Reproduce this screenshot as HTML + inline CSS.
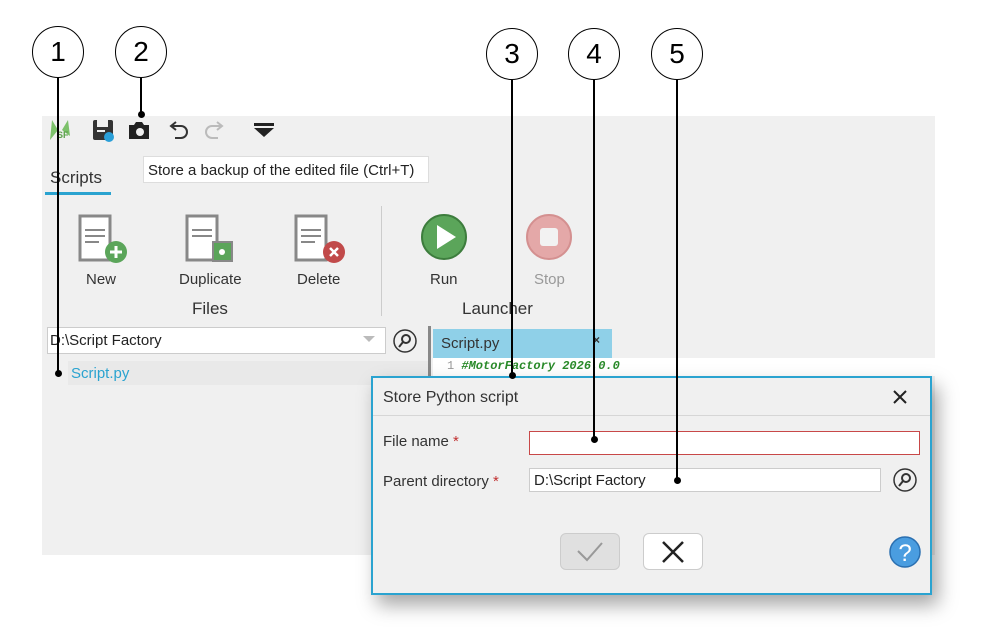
<!DOCTYPE html>
<html><head><style>
body{margin:0;width:996px;height:643px;background:#fff;position:relative;overflow:hidden;font-family:"Liberation Sans",sans-serif;color:#333}
.a{position:absolute}
.c{position:absolute;width:50px;height:50px;border:1.5px solid #000;border-radius:50%;background:#fff;font-size:28px;line-height:50px;text-align:center;color:#000;box-sizing:content-box}
.l{position:absolute;width:1.5px;background:#000}
.d{position:absolute;width:7px;height:7px;border-radius:50%;background:#000}
.t{position:absolute;font-size:15px;color:#333}
</style></head><body>
<div class="a" style="left:42px;top:116px;width:893px;height:439px;background:#f0f0f0"></div>
<!-- toolbar -->
<svg class="a" style="left:44px;top:116px" width="240" height="30">
<path d="M8 4 L14 14 L6 24 Z" fill="#7cc16a"/><path d="M24 4 L18 14 L26 20 Z" fill="#7cc16a"/><text x="13" y="22" font-size="9" font-weight="bold" fill="#5aa04a" font-family="Liberation Sans">SF</text>
<rect x="49" y="4" width="20" height="20" rx="2" fill="#333"/><rect x="53" y="4" width="11" height="7" fill="#f0f0f0"/><rect x="53" y="14" width="8" height="2" fill="#f0f0f0"/><circle cx="65" cy="21" r="5" fill="#2a9fd8"/>
<path d="M85 9h5l2-3h6l2 3h5v14h-20z" fill="#222"/><circle cx="96" cy="16" r="4" fill="#f0f0f0"/>
<path d="M128 10h9a6 6 0 0 1 0 12h-6M132 6l-5 4 5 4" stroke="#333" stroke-width="2" fill="none"/>
<path d="M177 10h-9a6 6 0 0 0 0 12h6M173 6l5 4-5 4" stroke="#bbb" stroke-width="2" fill="none"/>
<path d="M210 7h20v3h-20z M210 12h20l-10 9z" fill="#222"/>
</svg>
<div class="a" style="left:143px;top:156px;width:286px;height:27px;background:#fff;border:1px solid #ddd;font-size:15px;line-height:27px;padding-left:4px;box-sizing:border-box;color:#222">Store a backup of the edited file (Ctrl+T)</div>
<div class="t" style="left:50px;top:168px;font-size:17px">Scripts</div>
<div class="a" style="left:45px;top:192px;width:66px;height:3px;background:#2aa3d0"></div>
<!-- ribbon icons -->
<svg class="a" style="left:70px;top:210px" width="300" height="60">
<g stroke="#888" stroke-width="3" fill="#fff"><path d="M10 6h30v44h-30z"/><path d="M117 6h30v44h-30z"/><path d="M226 6h30v44h-30z"/></g>
<g stroke="#888" stroke-width="2"><path d="M15 20h20M15 26h20M15 32h14M122 20h20M122 26h20M231 20h20M231 26h20M231 32h14"/></g>
<circle cx="46" cy="42" r="11" fill="#5ba55a"/><path d="M40 42h12M46 36v12" stroke="#fff" stroke-width="3"/>
<rect x="143" y="32" width="19" height="19" fill="#5ba55a" stroke="#888" stroke-width="2"/><circle cx="152" cy="42" r="3" fill="#fff"/>
<circle cx="264" cy="42" r="11" fill="#c14a4a"/><path d="M260 38l8 8M268 38l-8 8" stroke="#fff" stroke-width="2.5"/>
</svg>
<svg class="a" style="left:419px;top:212px" width="50" height="50"><circle cx="25" cy="25" r="22" fill="#5ba55a" stroke="#3d7d3d" stroke-width="2"/><path d="M18 13v24l19-12z" fill="#fff"/></svg>
<svg class="a" style="left:524px;top:212px" width="50" height="50"><circle cx="25" cy="25" r="22" fill="#e4a8a8" stroke="#d49090" stroke-width="2"/><rect x="16" y="16" width="18" height="18" rx="3" fill="#f2f2f2"/></svg>
<div class="t" style="left:86px;top:271px">New</div>
<div class="t" style="left:179px;top:271px">Duplicate</div>
<div class="t" style="left:297px;top:271px">Delete</div>
<div class="t" style="left:430px;top:271px">Run</div>
<div class="t" style="left:534px;top:271px;color:#999">Stop</div>
<div class="t" style="left:192px;top:299px;font-size:17px">Files</div>
<div class="t" style="left:462px;top:299px;font-size:17px">Launcher</div>
<div class="a" style="left:381px;top:206px;width:1px;height:110px;background:#ccc"></div>
<!-- path combo -->
<div class="a" style="left:47px;top:327px;width:339px;height:27px;background:#fff;border:1px solid #ccc;box-sizing:border-box;font-size:15px;line-height:26px;padding-left:2px;color:#222">D:\Script Factory</div>
<svg class="a" style="left:362px;top:334px" width="14" height="10"><path d="M1 2h12l-6 6z" fill="#bbb"/></svg>
<svg class="a" style="left:392px;top:328px" width="26" height="26"><circle cx="13" cy="13" r="11" fill="none" stroke="#333" stroke-width="1.5"/><circle cx="14" cy="11" r="4" fill="none" stroke="#333" stroke-width="2"/><path d="M11 14l-4 5" stroke="#333" stroke-width="2"/></svg>
<div class="a" style="left:68px;top:361px;width:362px;height:24px;background:#e9e9e9"></div>
<div class="t" style="left:71px;top:365px;color:#2aa3d0">Script.py</div>
<div class="a" style="left:428px;top:326px;width:3px;height:200px;background:#888"></div>
<div class="a" style="left:433px;top:329px;width:179px;height:29px;background:#8fd0e8"></div>
<div class="t" style="left:441px;top:335px">Script.py</div>
<div class="t" style="left:593px;top:333px;font-size:12px;font-weight:bold">×</div>
<div class="a" style="left:433px;top:358px;width:502px;height:18px;background:#fff"></div>
<div class="a" style="left:447px;top:359px;font-size:12px;font-family:'Liberation Mono',monospace;color:#999">1 <span style="color:#2a8a2a;font-style:italic;font-weight:bold">#MotorFactory 2026.0.0</span></div>
<!-- dialog -->
<div class="a" style="left:371px;top:376px;width:561px;height:219px;background:#f0f0f0;border:2px solid #2aa3d0;box-sizing:border-box;box-shadow:6px 10px 18px rgba(0,0,0,.35)"></div>
<div class="t" style="left:383px;top:389px;font-size:16px">Store Python script</div>
<svg class="a" style="left:891px;top:388px" width="18" height="18"><path d="M3 3l12 12M15 3L3 15" stroke="#222" stroke-width="2"/></svg>
<div class="a" style="left:373px;top:415px;width:557px;height:1px;background:#d6d6d6"></div>
<div class="t" style="left:383px;top:433px">File name <span style="color:#c03030">*</span></div>
<div class="t" style="left:383px;top:473px">Parent directory <span style="color:#c03030">*</span></div>
<div class="a" style="left:529px;top:431px;width:391px;height:24px;background:#fff;border:1px solid #c84848;box-sizing:border-box"></div>
<div class="a" style="left:529px;top:468px;width:352px;height:24px;background:#fff;border:1px solid #ccc;box-sizing:border-box;font-size:15px;line-height:23px;padding-left:4px;color:#222">D:\Script Factory</div>
<svg class="a" style="left:892px;top:467px" width="26" height="26"><circle cx="13" cy="13" r="11" fill="none" stroke="#333" stroke-width="1.5"/><circle cx="14" cy="11" r="4" fill="none" stroke="#333" stroke-width="2"/><path d="M11 14l-4 5" stroke="#333" stroke-width="2"/></svg>
<div class="a" style="left:560px;top:533px;width:60px;height:37px;background:#e0e0e0;border:1px solid #ccc;border-radius:6px;box-sizing:border-box"></div>
<svg class="a" style="left:575px;top:539px" width="30" height="26"><path d="M3 12l9 9 15-17" stroke="#999" stroke-width="2" fill="none"/></svg>
<div class="a" style="left:643px;top:533px;width:60px;height:37px;background:#fff;border:1px solid #ccc;border-radius:6px;box-sizing:border-box"></div>
<svg class="a" style="left:661px;top:540px" width="24" height="24"><path d="M2 2l20 20M22 2L2 22" stroke="#222" stroke-width="2.5"/></svg>
<svg class="a" style="left:888px;top:535px" width="34" height="34"><circle cx="17" cy="17" r="15" fill="#4a9de0" stroke="#2a6fb0" stroke-width="1.5"/><text x="17" y="26" text-anchor="middle" font-size="24" fill="#fff" font-family="Liberation Sans">?</text></svg>
<!-- callouts -->
<div class="l" style="left:57px;top:78px;height:296px"></div><div class="d" style="left:55px;top:370px"></div>
<div class="l" style="left:140px;top:78px;height:38px"></div><div class="d" style="left:138px;top:111px"></div>
<div class="l" style="left:511px;top:80px;height:296px"></div><div class="d" style="left:509px;top:372px"></div>
<div class="l" style="left:593px;top:80px;height:358px"></div><div class="d" style="left:591px;top:436px"></div>
<div class="l" style="left:676px;top:80px;height:401px"></div><div class="d" style="left:674px;top:477px"></div>
<div class="c" style="left:32px;top:26px">1</div>
<div class="c" style="left:115px;top:26px">2</div>
<div class="c" style="left:486px;top:28px">3</div>
<div class="c" style="left:568px;top:28px">4</div>
<div class="c" style="left:651px;top:28px">5</div>
</body></html>
